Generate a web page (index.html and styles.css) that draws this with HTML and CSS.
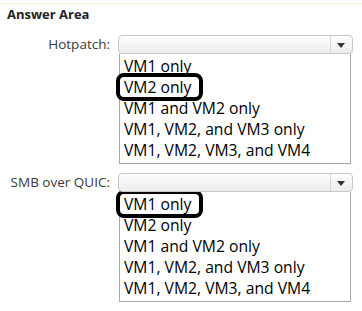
FILE: index.html
```html
<!DOCTYPE html>
<html lang="en">
<head>
  <meta charset="UTF-8">
  <title>Answer Area</title>
  <link rel="stylesheet" href="styles.css">
</head>
<body>
  <div class="answer-area">
    <h1>Answer Area</h1>

    <div class="field">
      <div class="label">Hotpatch:</div>
      <div class="control">
        <div class="select"><span class="arrow"></span></div>
        <ul class="options">
          <li>VM1 only</li>
          <li><span class="marked">VM2 only</span></li>
          <li>VM1 and VM2 only</li>
          <li>VM1, VM2, and VM3 only</li>
          <li>VM1, VM2, VM3, and VM4</li>
        </ul>
      </div>
    </div>

    <div class="field">
      <div class="label">SMB over QUIC:</div>
      <div class="control">
        <div class="select"><span class="arrow"></span></div>
        <ul class="options">
          <li><span class="marked">VM1 only</span></li>
          <li>VM2 only</li>
          <li>VM1 and VM2 only</li>
          <li>VM1, VM2, and VM3 only</li>
          <li>VM1, VM2, VM3, and VM4</li>
        </ul>
      </div>
    </div>
  </div>
</body>
</html>
```

FILE: styles.css
```css
body {
  margin: 0;
  background: #fff;
  font-family: "Open Sans", "Noto Sans", sans-serif;
  color: #000;
}
.answer-area {
  margin-top: 3px;
  border-top: 1px solid #fbf3dc;
  padding: 2px 0 0 7px;
}
h1 {
  margin: 0 0 13px;
  font-size: 13px;
  font-weight: bold;
  line-height: 16px;
  color: #222;
}
.field {
  display: flex;
  margin-bottom: 9px;
}
.label {
  width: 111px;
  box-sizing: border-box;
  flex-shrink: 0;
  text-align: right;
  white-space: nowrap;
  font-size: 13.5px;
  line-height: 19px;
  color: #3a3a3a;
  padding-right: 8px;
}
.control {
  width: 235px;
}
.select {
  height: 17px;
  border: 1px solid #c8c8c8;
  border-radius: 4px;
  background: linear-gradient(#fff, #ececec);
  position: relative;
}
.arrow {
  position: absolute;
  right: 0;
  top: 0;
  bottom: 0;
  width: 21px;
  border-left: 1px solid #d4d4d4;
}
.arrow::after {
  content: "";
  position: absolute;
  left: 6px;
  top: 7px;
  border-left: 4px solid transparent;
  border-right: 4px solid transparent;
  border-top: 5px solid #333;
}
.options {
  list-style: none;
  margin: 0 2px 0 1px;
  padding: 2px 0;
  border: 1px solid #a8a8a8;
  border-top: none;
}
.options li {
  height: 21px;
  line-height: 21px;
  font-size: 15.7px;
  padding-left: 4px;
  white-space: nowrap;
}
.marked {
  display: inline-block;
  margin-left: -8px;
  margin-top: -4px;
  padding: 0 8px 0 4px;
  line-height: 20px;
  border: 4px solid #000;
  border-radius: 8px;
}
```
